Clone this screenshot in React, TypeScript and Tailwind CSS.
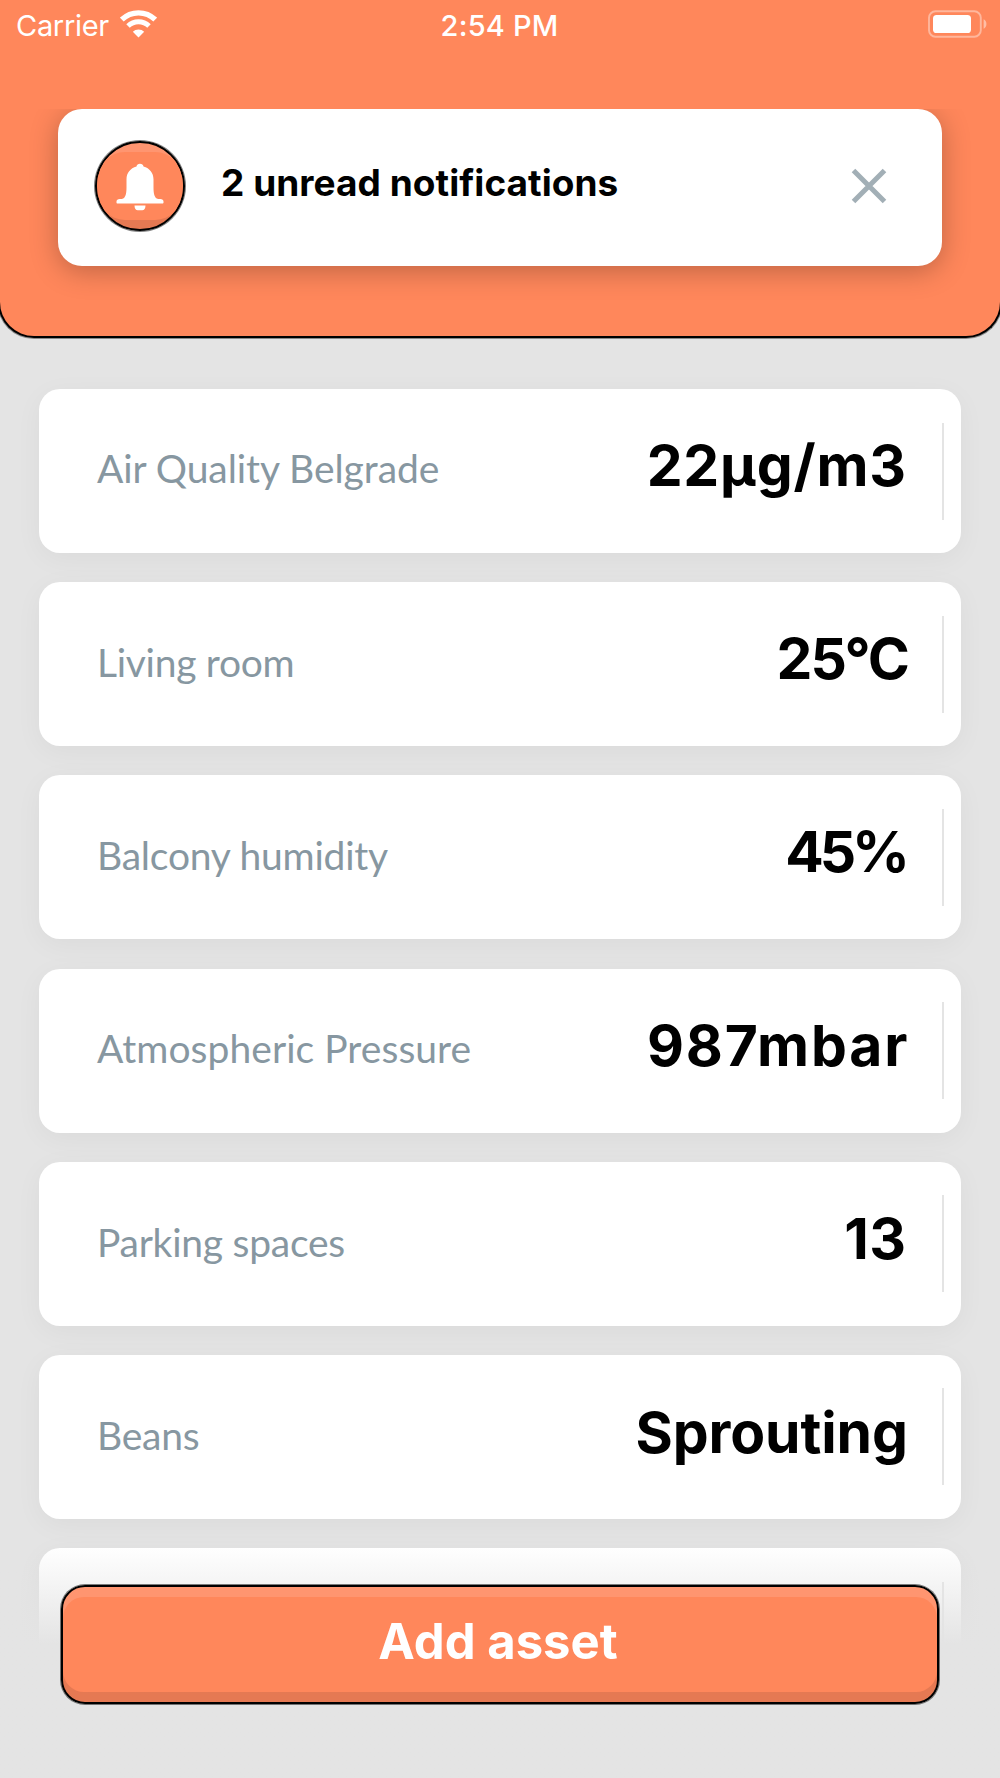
type Asset = { name: string; nameStyle: string; value: string; valueStyle: string };

const assets: Asset[] = [
  { name: 'Air Quality Belgrade', nameStyle: 'tracking-[-0.06px] pb-[6px]', value: '22µg/m3', valueStyle: 'tracking-[0.8px] -mr-[0.8px] pb-[10px]' },
  { name: 'Living room', nameStyle: 'tracking-[-0.3px] pb-[5px]', value: '25°C', valueStyle: 'tracking-[-2px] -mr-[2px] pb-[10px]' },
  { name: 'Balcony humidity', nameStyle: 'tracking-[-0.22px] pb-[5px]', value: '45%', valueStyle: 'tracking-[-4px] pb-[10px]' },
  { name: 'Atmospheric Pressure', nameStyle: 'tracking-[0.05px] pb-[5px]', value: '987mbar', valueStyle: 'tracking-[1.9px] -mr-[3.4px] pb-[9px]' },
  { name: 'Parking spaces', nameStyle: 'tracking-[-0.25px] pb-[4px]', value: '13', valueStyle: 'tracking-[0.5px] -mr-[0.5px] pb-[9px]' },
  { name: 'Beans', nameStyle: 'tracking-[-0.25px] pb-[4px]', value: 'Sprouting', valueStyle: 'tracking-[-0.1px] -mr-[1.9px] pb-[8px]' },
  { name: '', nameStyle: '', value: '', valueStyle: '' },
];

function StatusBar() {
  return (
    <div className="grid h-[50px] grid-cols-3 items-center pr-[13px] pl-[16px] text-white">
      <div className="flex items-center gap-[11px] pt-[1px]">
        <span className="text-[29px] leading-[48px] font-normal tracking-[-0.3px]">Carrier</span>
        <svg className="-mt-[4px] h-[28px] w-[37px]" viewBox="0 0 37 28" fill="none" stroke="#fff">
          <path d="M1.8 9.6 A24 24 0 0 1 35.2 9.6" strokeWidth="5.4" />
          <path d="M8 16 A15.2 15.2 0 0 1 29 16" strokeWidth="5" />
          <path d="M18.5 27.5 L12.8 21.8 A8 8 0 0 1 24.2 21.8 Z" fill="#fff" stroke="none" />
        </svg>
      </div>
      <span className="pt-[1px] pr-[4px] text-center text-[29px] leading-[48px] font-medium tracking-[0.2px]">2:54 PM</span>
      <svg className="-mt-[2px] h-[28px] w-[60px] justify-self-end" viewBox="0 0 60 28">
        <rect x="2" y="1.3" width="51.8" height="25.4" rx="6.5" fill="none" stroke="#fff" strokeOpacity="0.4" strokeWidth="1.9" />
        <rect x="6" y="5" width="38" height="18" rx="3.6" fill="#fff" />
        <path d="M56.6 9.3 C60.4 11 60.4 17 56.6 18.8 Z" fill="#fff" fillOpacity="0.45" />
      </svg>
    </div>
  );
}

function Notification() {
  return (
    <div className="mx-[58px] mt-[59px] flex h-[157px] items-center rounded-[24px] bg-white pr-[53px] pb-[3px] pl-[37px] shadow-[0_5px_28px_rgba(0,0,0,0.26)] [clip-path:inset(0_-50px_-50px_-50px)]">
      <div className="relative size-[90px] shrink-0 overflow-hidden rounded-full border-2 border-black bg-linear-to-b from-[#ff9570] from-50% to-[#e57953] to-50% shadow-[0_0_0_1px_rgba(0,0,0,0.5)]">
        <div className="absolute inset-x-0 top-[9px] bottom-[9px] rounded-[28px] bg-[#ff875b]" />
        <svg className="absolute top-[20px] left-[19px] size-[48px]" viewBox="0 0 48 48" fill="#fff">
          <path d="M24 .8c2 0 3.1 1 3.5 2.8 6.2 1.8 10 6.5 10 12.7v8.2c0 6.5 1.2 11.1 4.6 11.4h2.2c2 0 3.2 1 3.2 2.7v.9c0 .6-.4 1-1 1h-45c-.6 0-1-.4-1-1v-.9c0-1.7 1.2-2.7 3.2-2.7h2.2c3.4-.3 4.6-4.9 4.6-11.4v-8.2c0-6.2 3.8-10.900 10-12.7C20.9 1.8 22 .8 24 .8Z" />
          <path d="M18.5 42.400h11c0 3-1.200 4.800-3.300 4.800h-4.400c-2.100 0-3.300-1.800-3.300-4.800Z" />
        </svg>
      </div>
      <span className="ml-[36px] flex-1 pb-[6px] text-[37px] leading-[48px] font-bold tracking-[0.05px] whitespace-nowrap text-black">
        2 unread notifications
      </span>
      <svg className="size-[40px]" viewBox="0 0 40 40" stroke="#a2afb6" strokeWidth="5">
        <path d="M4.5 4.5 35.5 35.5M35.5 4.5 4.5 35.5" />
      </svg>
    </div>
  );
}

function AssetCard({ asset }: { asset: Asset }) {
  return (
    <div className="flex h-[164px] shrink-0 items-center rounded-[21px] bg-white pr-[17px] pl-[58px] shadow-[0_6px_28px_rgba(0,0,0,0.045)]">
      <span className={`flex-1 font-['Lato',sans-serif] text-[39px] leading-[48px] whitespace-nowrap text-[#8797a1] ${asset.nameStyle}`}>
        {asset.name}
      </span>
      <span className={`text-[57px] leading-[70px] font-bold whitespace-nowrap text-black ${asset.valueStyle}`}>
        {asset.value}
      </span>
      <div className="ml-[36px] h-[97px] w-[2px] bg-[#e4e4e4]" />
    </div>
  );
}

export default function App() {
  return (
    <div className="relative flex h-[1778px] w-[1000px] flex-col overflow-hidden bg-[#e4e4e4] font-['Inter',sans-serif]">
      <header className="-mx-[2px] h-[338px] shrink-0 rounded-b-[36px] border-2 border-t-0 border-black bg-[#ff875b] shadow-[0_0_0_1px_rgba(0,0,0,0.4)]">
        <StatusBar />
        <Notification />
      </header>
      <main className="flex flex-col gap-[29.2px] px-[39px] pt-[51px]">
        {assets.map((asset, i) => (
          <AssetCard key={i} asset={asset} />
        ))}
      </main>
      <footer className="absolute inset-x-0 bottom-0 h-[232px] bg-linear-to-b from-[#e4e4e400] to-[#e4e4e4] to-[98px] px-[61px] pt-[39px]">
        <button className="relative flex h-[119px] w-full items-center justify-center overflow-hidden rounded-[24px] border-2 border-black bg-linear-to-b from-[#ff9570] from-50% to-[#e57953] to-50% shadow-[0_0_0_1px_rgba(0,0,0,0.5)]">
          <span className="absolute inset-x-0 top-[10px] bottom-[10px] rounded-[21px] bg-[#ff875b]" />
          <span className="relative pr-[4px] pb-[6px] text-[49px] leading-[60px] font-bold text-white">Add asset</span>
        </button>
      </footer>
    </div>
  );
}
